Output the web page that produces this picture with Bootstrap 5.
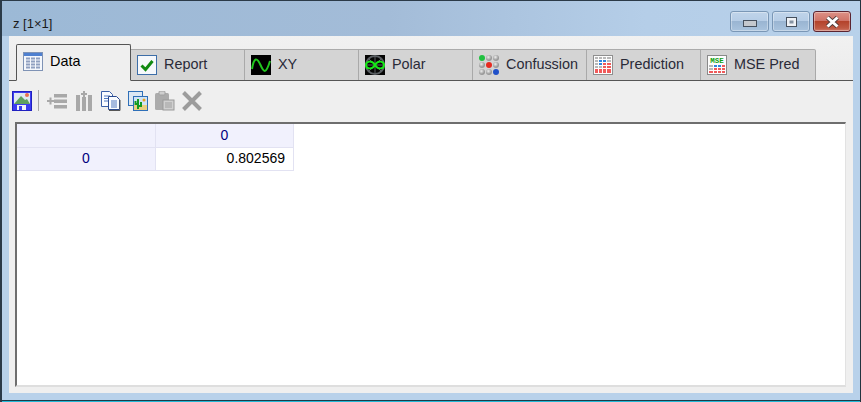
<!DOCTYPE html>
<html lang="en">
<head>
<meta charset="utf-8">
<title>z [1×1]</title>
<link href="https://cdn.jsdelivr.net/npm/bootstrap@5.3.0/dist/css/bootstrap.min.css" rel="stylesheet">
<style>
html,body{margin:0;height:402px;overflow:hidden;background:#b8d1ea;font-family:"Liberation Sans",Arial,sans-serif;}
.win{width:861px;height:402px;border:1px solid #2b3a48;border-left-width:2px;border-right:1px solid #22343f;border-bottom:0;background:#b8d1ea;}
.win-edge{height:2px;background:#23b8d6;border-top:1px solid #1b3a48;margin-top:auto;flex:none;}
.tbar{height:35px;flex:none;padding:0 9px 0 11px;background:linear-gradient(90deg,#9cb9d6 0,#a3bcd8 45%,#b5cee8 75%,#b8d1ea 100%);}
.ttl{font-size:13px;color:#1a1a1a;padding-top:15px;line-height:15px;}
.wbtns{gap:3px;padding-top:10px;}
.wbtn{width:38px;height:21px;border:1px solid #7a97b6;border-radius:3px;background:linear-gradient(#c0d4ea 0,#b6cde6 46%,#9ab5d2 50%,#a9c3de 100%);box-shadow:inset 0 0 0 1px rgba(255,255,255,.35);}
.wbtn.wide{width:39px;}
.wbtn.cls{border-color:#5b2430;background:linear-gradient(#dd9186 0,#cf7468 45%,#b4432c 50%,#bf5a44 85%,#d17c6d 100%);}
.client{margin:0 7px;height:357px;flex:none;background:#efefef;display:flex;flex-direction:column;}
.tabrow{height:45px;flex:none;padding:8px 0 0 7px;background:linear-gradient(#f1f1f1,#ececec);border-bottom:1px solid #555;align-items:flex-end;flex-wrap:nowrap;}
.tabrow .tb{width:114px;height:31px;margin:0;padding:0 0 1px 6px;background:#d4d4d4;border:0;border-right:1px solid #a9a9a9;border-top:1px solid #ababab;color:#2a2a38;font-size:14.4px;display:flex;align-items:center;gap:7px;border-radius:0;text-decoration:none;}
.tabrow .tb svg{position:relative;top:0;}
.tabrow .tb.last{border-top-right-radius:2px;width:115px;}
.tabrow .tb.on{width:115px;height:37px;background:#efefef;border:1px solid #555;border-bottom:1px solid #efefef;margin-bottom:-1px;color:#000;border-radius:2px 2px 0 0;padding-left:6px;gap:7px;padding-bottom:2px;}
.tools{height:41px;flex:none;padding:0 0 2px 3px;}
.ticon{display:block;margin-right:7px;flex:none;}
.ticon.m0{margin-right:0;}
.ticon.m9{margin-right:9px;}
.sep{width:1px;height:21px;background:#a8a8a8;margin:0 8px 0 6px;}
.gridbox{margin:0 7px 6px 6px;flex:1;background:#fff;border:1px solid #d6d6d6;border-top:2px solid #6e6e6e;border-left:2px solid #6e6e6e;border-right-color:#e2e2e2;border-bottom:2px solid #dedede;}
.gt{border-collapse:collapse;table-layout:fixed;width:277px;margin:0;font-size:14px;color:#000080;}
.gt td{border:1px solid #e2e2f2;border-top:0;border-left:0;padding:0;height:23px;text-align:center;background:#f1f1fd;vertical-align:middle;}
.gt td.val{background:#fff;text-align:right;padding-right:8px;color:#000;}
.msetxt{font:bold 7.500px "Liberation Mono",monospace;fill:#0fa00f;}
</style>
</head>
<body>
<div class="win d-flex flex-column">
  <div class="tbar d-flex justify-content-between">
    <div class="ttl">z [1×1]</div>
    <div class="wbtns d-flex">
      <div class="wbtn wide d-flex align-items-end justify-content-center pb-1"><svg class="d-block" width="14" height="7" viewBox="0 0 14 7"><rect x=".5" y=".5" width="13" height="6" fill="#c4c8ce" stroke="#46505e"/></svg></div>
      <div class="wbtn d-flex align-items-center justify-content-center"><svg width="11" height="10" viewBox="0 0 11 10"><rect x=".5" y=".5" width="10" height="9" fill="#eef1f5" stroke="#46505e"/><rect x="3.500" y="3.500" width="4" height="3" fill="#8593a3"/></svg></div>
      <div class="wbtn cls d-flex align-items-center justify-content-center"><svg width="15" height="12" viewBox="0 0 15 12"><path d="M2.500 1.500 12.500 10.500M12.500 1.500 2.500 10.500" stroke="#4a3a3a" stroke-width="4.500"/><path d="M2.500 1.500 12.500 10.500M12.500 1.500 2.500 10.500" stroke="#fff" stroke-width="3"/></svg></div>
    </div>
  </div>
  <div class="client">
    <div class="nav tabrow d-flex">
      <a class="tb on"><svg width="20" height="19" viewBox="0 0 20 19"><rect x=".5" y=".5" width="19" height="18" fill="#f4f7fc" stroke="#7f93b5"/><rect x="1" y="1" width="18" height="3" fill="#4f80d0"/><path d="M3 6.500h14M3 9.500h14M3 12.500h14M3 15.500h14" stroke="#8fa0c0" stroke-width="2"/><path d="M7.500 5v12M12.500 5v12" stroke="#f4f7fc"/></svg>Data</a>
      <a class="tb"><svg width="20" height="20" viewBox="0 0 20 20"><rect x=".5" y=".5" width="19" height="19" fill="#f6f8fb" stroke="#3d6ea8"/><path d="M4.500 10.500 8.500 14.500 15.500 6" fill="none" stroke="#128a12" stroke-width="3"/></svg>Report</a>
      <a class="tb"><svg width="20" height="20" viewBox="0 0 20 20"><rect width="20" height="20" fill="#000"/><path d="M1 14C3 2 6 2 9.500 10S15 19 19 6" fill="none" stroke="#22c61e" stroke-width="2"/></svg>XY</a>
      <a class="tb"><svg width="20" height="20" viewBox="0 0 20 20"><rect width="20" height="20" fill="#050505"/><circle cx="10" cy="10" r="9" fill="none" stroke="#5a5f63" stroke-width="2"/><path d="M10 1v18M1 10h18M4 4l12 12M16 4 4 16" stroke="#5a5f63"/><path d="M10 10C7 5 1 6 1 10s6 5 9 0 9-4 9 0-6 5-9 0Z" fill="none" stroke="#17e817" stroke-width="2"/></svg>Polar</a>
      <a class="tb"><svg width="20" height="20" viewBox="0 0 20 20"><defs><radialGradient id="g1" cx=".4" cy=".35"><stop offset="0" stop-color="#eee"/><stop offset="1" stop-color="#999"/></radialGradient></defs><circle cx="3" cy="3" r="3" fill="#20c040"/><circle cx="10" cy="3" r="3" fill="url(#g1)"/><circle cx="17" cy="3" r="3" fill="url(#g1)"/><circle cx="3" cy="10" r="3" fill="url(#g1)"/><circle cx="10" cy="10" r="3" fill="#e62a20"/><circle cx="17" cy="10" r="3" fill="url(#g1)"/><circle cx="3" cy="17" r="3" fill="url(#g1)"/><circle cx="10" cy="17" r="3" fill="url(#g1)"/><circle cx="17" cy="17" r="3" fill="#2050c8"/></svg>Confussion</a>
      <a class="tb"><svg width="20" height="20" viewBox="0 0 20 20"><rect x=".5" y=".5" width="19" height="19" fill="#fdfdfd" stroke="#8f8f8f"/><g fill="#b8b8b8"><rect x="2" y="2" width="3" height="2"/><rect x="6" y="2" width="3" height="2"/><rect x="10" y="2" width="3" height="2"/><rect x="14" y="2" width="4" height="2"/><rect x="2" y="5" width="3" height="2"/><rect x="2" y="8" width="3" height="2"/><rect x="6" y="11" width="3" height="2"/><rect x="2" y="11" width="3" height="2"/><rect x="14" y="5" width="4" height="2"/></g><g fill="#2f86e0"><rect x="6" y="5" width="3" height="2"/><rect x="10" y="5" width="3" height="2"/><rect x="6" y="8" width="3" height="2"/></g><g fill="#f05a5a"><rect x="10" y="8" width="3" height="2"/><rect x="14" y="8" width="4" height="2"/><rect x="10" y="11" width="3" height="2"/><rect x="14" y="11" width="4" height="2"/><rect x="2" y="14" width="3" height="4"/><rect x="6" y="14" width="3" height="4"/><rect x="10" y="14" width="3" height="4"/><rect x="14" y="14" width="4" height="4"/></g></svg>Prediction</a>
      <a class="tb last"><svg width="20" height="20" viewBox="0 0 20 20"><rect x=".5" y=".5" width="19" height="19" fill="#fdfdfd" stroke="#8a8a8a"/><text x="10" y="8" text-anchor="middle" class="msetxt">MSE</text><g fill="#b8b8b8"><rect x="2" y="10" width="4" height="2"/><rect x="2" y="13" width="4" height="2"/></g><g fill="#2f86e0"><rect x="7" y="10" width="3" height="2"/><rect x="11" y="10" width="3" height="2"/></g><g fill="#f05a5a"><rect x="15" y="10" width="3" height="2"/><rect x="7" y="13" width="3" height="2"/><rect x="11" y="13" width="3" height="2"/><rect x="15" y="13" width="3" height="2"/><rect x="2" y="16" width="4" height="2"/><rect x="7" y="16" width="3" height="2"/><rect x="11" y="16" width="3" height="2"/><rect x="15" y="16" width="3" height="2"/></g></svg><span>MSE Pred</span></a>
    </div>
    <div class="tools d-flex align-items-center">
      <svg class="ticon m0" width="20" height="20" viewBox="0 0 20 20"><rect x=".5" y=".5" width="19" height="19" fill="#3c3cf0" stroke="#2020c0"/><rect x="2" y="2" width="16" height="11" fill="#dfe8f0"/><path d="M2 13 9 5l4 4 2-1 3 5Z" fill="#5fa05f"/><circle cx="15" cy="4" r="2" fill="#e87050"/><rect x="5" y="14" width="9" height="5" fill="#f2f2fa"/><rect x="7" y="15" width="3" height="4" fill="#3c3cf0"/></svg>
      <div class="sep"></div>
      <svg class="ticon m9" width="20" height="20" viewBox="0 0 20 20" fill="#a8a8a8"><rect x="7" y="3" width="13" height="3.500"/><rect x="7" y="8.500" width="13" height="3.500"/><rect x="7" y="14" width="13" height="3.500"/><path d="M0 9h2.500V6.500h2V9H7v2H4.500v2.500h-2V11H0Z"/></svg>
      <svg class="ticon m9" width="16" height="20" viewBox="0 0 16 20" fill="#a8a8a8"><rect x="0" y="4" width="4" height="16"/><rect x="6" y="6" width="4" height="14"/><rect x="12" y="4" width="4" height="16"/><path d="M7 0h2v2h2v2H9v2H7V4H5V2h2Z"/></svg>
      <svg class="ticon" width="20" height="20" viewBox="0 0 20 20"><path d="M.5.500h8l3 3v12H.5Z" fill="#fafcff" stroke="#3b60a8"/><path d="M3 5h6M3 7.500h6M3 10h6" stroke="#5078c0"/><path d="M7.500 5.500h8l3 3v10h-11Z" fill="#fafcff" stroke="#2a4a90"/><path d="M10 10h6M10 12h6M10 14h6M10 16h6" stroke="#5078c0"/><path d="M8 19.500h11V9" fill="none" stroke="#555"/></svg>
      <svg class="ticon" width="20" height="20" viewBox="0 0 20 20"><rect x=".5" y=".5" width="14" height="14" fill="#dce8f4" stroke="#2e6fb8"/><rect x="5.500" y="5.500" width="14" height="14" fill="#e8cf80" stroke="#2e6fb8"/><rect x="6" y="6" width="13" height="8" fill="#cfe3f5"/><circle cx="16" cy="9" r="1.500" fill="#e8a020"/><path d="M10 8v10M10 13H7.500v-3M10 15h3v-4" fill="none" stroke="#129a20" stroke-width="2"/></svg>
      <svg class="ticon" width="20" height="20" viewBox="0 0 20 20"><rect x="0" y="2" width="14" height="17" rx="1.500" fill="#ababab"/><rect x="4" y="0" width="6" height="4" rx="1" fill="#cfcfcf" stroke="#a0a0a0"/><rect x="8" y="9" width="11" height="10" fill="#d0d0d0" stroke="#9a9a9a"/><path d="M10 12h7M10 14h7M10 16h7" stroke="#a0a0a0"/></svg>
      <svg class="ticon" width="20" height="20" viewBox="0 0 20 20"><path d="M1.500 1.500 18.500 18.500M18.500 1.500 1.500 18.500" stroke="#9c9c9c" stroke-width="4"/></svg>
    </div>
    <div class="gridbox">
      <table class="gt">
        <colgroup><col style="width:138px"><col style="width:138px"></colgroup>
        <tr><td></td><td>0</td></tr>
        <tr><td>0</td><td class="val">0.802569</td></tr>
      </table>
    </div>
  </div>
  <div class="win-edge"></div>
</div>
<script src="https://cdn.jsdelivr.net/npm/bootstrap@5.3.0/dist/js/bootstrap.bundle.min.js"></script>
</body>
</html>
